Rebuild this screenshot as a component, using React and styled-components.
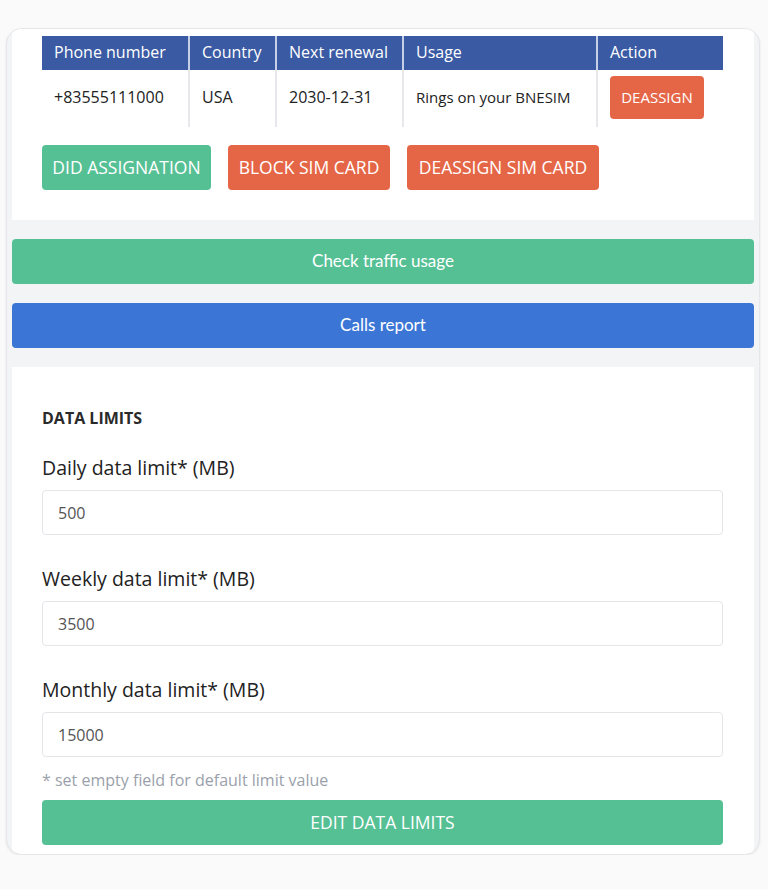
import React from 'react';
import styled, { createGlobalStyle } from 'styled-components';

const font = '"Open Sans", Lato, sans-serif';

const GlobalStyle = createGlobalStyle`
  body {
    margin: 0;
    background: #fafafa;
    font-family: ${font};
    color: #222;
  }
`;

const Card = styled.div`
  margin: 28px 8px 0 6px;
  width: 754px;
  box-sizing: border-box;
  background: #f3f4f6;
  border: 1px solid #e6e7ea;
  border-radius: 16px;
  box-shadow: 0 1px 3px rgba(0, 0, 0, 0.08);
  padding: 0 5px;
  overflow: hidden;
  display: flex;
  flex-direction: column;
  gap: 19px;
`;

const Section = styled.div`
  background: #fff;
  padding: ${(p) => p.$pad};
  display: flex;
  flex-direction: column;
`;

const Table = styled.table`
  border-collapse: collapse;
  table-layout: fixed;
  width: 681px;
  font-size: 16px;
  th {
    background: #3a5aa3;
    color: #fff;
    font-weight: 400;
    text-align: left;
    height: 31px;
    padding: 0 12px 3px;
    border-right: 2px solid #c5d0e6;
    white-space: nowrap;
  }
  th:last-child,
  td:last-child {
    border-right: none;
  }
  td {
    height: 54px;
    padding: 0 12px 3px;
    border-right: 2px solid #e6e8ec;
    color: #222;
    white-space: nowrap;
  }
`;

const SmallCell = styled.td`
  && {
    font-size: 15px;
  }
`;

const Btn = styled.button`
  border: none;
  border-radius: 4px;
  background: ${(p) => p.$bg};
  color: #fff;
  font-family: ${(p) => p.$font || font};
  font-size: ${(p) => p.$size || '17.5px'};
  height: ${(p) => p.$h || '45px'};
  padding: 0 0 ${(p) => p.$pb || '2px'};
  width: ${(p) => p.$w || 'auto'};
  text-transform: ${(p) => (p.$upper ? 'uppercase' : 'none')};
  white-space: nowrap;
  cursor: pointer;
`;

const BtnRow = styled.div`
  display: flex;
  gap: 17px;
  margin-top: 18px;
`;

const Title = styled.div`
  font-weight: 700;
  font-size: 16px;
  line-height: 20px;
  color: #2a2a2a;
  margin-bottom: 1px;
`;

const Label = styled.label`
  display: block;
  font-size: 19.5px;
  line-height: 26px;
  margin: ${(p) => (p.$first ? '26px' : '31px')} 0 9px;
  color: #222;
`;

const Input = styled.input`
  box-sizing: border-box;
  width: 681px;
  height: 45px;
  border: 1px solid #e3e5e9;
  border-radius: 4px;
  padding: 0 15px;
  font-family: ${font};
  font-size: 16px;
  color: #555;
  outline: none;
`;

const Hint = styled.div`
  font-size: 16px;
  line-height: 22px;
  color: #9aa1ab;
  margin: 12px 0 9px;
`;

const limits = [
  { label: 'Daily data limit* (MB)', value: '500' },
  { label: 'Weekly data limit* (MB)', value: '3500' },
  { label: 'Monthly data limit* (MB)', value: '15000' },
];

export default function App() {
  return (
    <>
      <GlobalStyle />
      <Card>
        <Section $pad="7px 30px 30px">
          <Table>
            <colgroup>
              <col style={{ width: 147 }} />
              <col style={{ width: 87 }} />
              <col style={{ width: 127 }} />
              <col style={{ width: 194 }} />
              <col style={{ width: 126 }} />
            </colgroup>
            <thead>
              <tr>
                <th>Phone number</th>
                <th>Country</th>
                <th>Next renewal</th>
                <th>Usage</th>
                <th>Action</th>
              </tr>
            </thead>
            <tbody>
              <tr>
                <td>+83555111000</td>
                <td>USA</td>
                <td>2030-12-31</td>
                <SmallCell>Rings on your BNESIM</SmallCell>
                <td>
                  <Btn $bg="#e56646" $upper $size="15px" $h="43px" $w="94px" $pb="0">
                    Deassign
                  </Btn>
                </td>
              </tr>
            </tbody>
          </Table>
          <BtnRow>
            <Btn $bg="#56c095" $upper $w="169px">DID assignation</Btn>
            <Btn $bg="#e56646" $upper $w="162px">Block SIM card</Btn>
            <Btn $bg="#e56646" $upper $w="192px">Deassign SIM card</Btn>
          </BtnRow>
        </Section>
        <Btn $bg="#56c095" $font="Lato, sans-serif" $size="17px" $w="100%">
          Check traffic usage
        </Btn>
        <Btn $bg="#3b76d6" $font="Lato, sans-serif" $size="17px" $w="100%">
          Calls report
        </Btn>
        <Section $pad="41px 30px 9px">
          <Title>DATA LIMITS</Title>
          {limits.map((l, i) => (
            <div key={l.label}>
              <Label $first={i === 0}>{l.label}</Label>
              <Input defaultValue={l.value} />
            </div>
          ))}
          <Hint>* set empty field for default limit value</Hint>
          <Btn $bg="#56c095" $upper $w="681px">Edit data limits</Btn>
        </Section>
      </Card>
    </>
  );
}
